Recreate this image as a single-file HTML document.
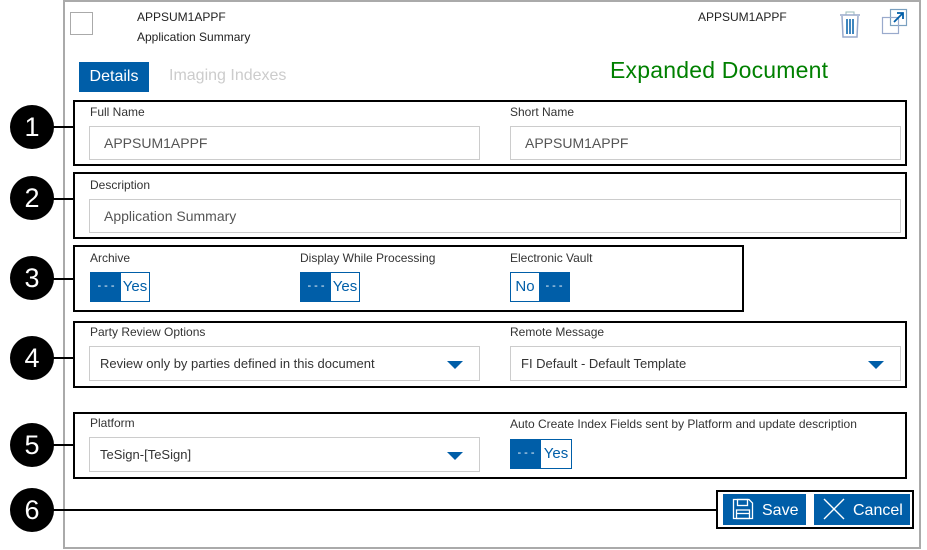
<!DOCTYPE html>
<html><head><meta charset="utf-8"><style>
*{box-sizing:border-box;margin:0;padding:0}
body{width:927px;height:550px;background:#fff;position:relative;overflow:hidden;font-family:"Liberation Sans",sans-serif;color:#222}
.a{position:absolute}
.panel{left:63px;top:0;width:858px;height:549px;border:2px solid #aaa;border-top-width:2px}
.box{border:2px solid #000;position:absolute}
.lbl{position:absolute;font-size:12px;color:#333}
.inp{position:absolute;border:1px solid #ccc;height:34px;font-size:14px;color:#555;padding-left:14px;line-height:32px}
.sel{position:absolute;border:1px solid #ccc;height:35px;font-size:13px;color:#333;padding-left:10px;line-height:33px}
.sel:after{content:"";position:absolute;right:16px;top:14px;border-left:8px solid transparent;border-right:8px solid transparent;border-top:8px solid #005ea8}
.circ{position:absolute;left:10px;width:44px;height:44px;border-radius:50%;background:#000;color:#fff;font-size:27px;text-align:center;line-height:44px}
.ln{position:absolute;left:50px;width:24px;height:2px;background:#000}
.tg{position:absolute;height:30px;border:1px solid #005ea8;display:flex;font-size:15px}
.tg .d{width:30px;background:#005ea8;color:#fff;text-align:center;line-height:26px;font-size:11px}
.tg .t{width:28px;color:#005ea8;text-align:center;line-height:28px}
.btn{position:absolute;background:#005ea8;color:#fff;font-size:16px;height:31px;line-height:33px}
</style></head><body>
<div class="a panel"></div>
<div class="a" style="left:70px;top:12px;width:23px;height:23px;border:1px solid #aaa"></div>
<div class="a" style="left:137px;top:10px;font-size:12px">APPSUM1APPF</div>
<div class="a" style="left:137px;top:30px;font-size:12px">Application Summary</div>
<div class="a" style="left:698px;top:10px;font-size:12px">APPSUM1APPF</div>
<svg class="a" style="left:838px;top:10px" width="24" height="30" viewBox="0 0 24 30"><rect x="8" y="2" width="8" height="3" fill="none" stroke="#9bb" stroke-width="1"/><line x1="2" y1="5" x2="22" y2="5" stroke="#9ac" stroke-width="1.5"/><path d="M4 6 L5 27 L19 27 L20 6" fill="none" stroke="#9ac" stroke-width="1.5"/><line x1="9" y1="9" x2="9" y2="24" stroke="#005ea8" stroke-width="1.5"/><line x1="12" y1="9" x2="12" y2="24" stroke="#005ea8" stroke-width="1.5"/><line x1="15" y1="9" x2="15" y2="24" stroke="#005ea8" stroke-width="1.5"/></svg>
<svg class="a" style="left:881px;top:8px" width="28" height="28" viewBox="0 0 28 28"><rect x="9.5" y="1.5" width="16" height="16" fill="#fff" stroke="#7aa0c0" stroke-width="1.2"/><rect x="1.5" y="9.5" width="16" height="16" fill="none" stroke="#9ac" stroke-width="1.2"/><line x1="13" y1="14" x2="22" y2="5" stroke="#005ea8" stroke-width="1.8"/><path d="M16 5 L22 5 L22 11" fill="none" stroke="#005ea8" stroke-width="1.8"/></svg>
<div class="a" style="left:79px;top:62px;width:70px;height:30px;background:#005ea8;color:#fff;font-size:16px;text-align:center;line-height:30px">Details</div>
<div class="a" style="left:169px;top:67px;font-size:16px;color:#ccc">Imaging Indexes</div>
<div class="a" style="left:610px;top:57px;font-size:23px;color:#008000;letter-spacing:0.2px">Expanded Document</div>

<div class="box" style="left:73px;top:100px;width:834px;height:66px"></div>
<div class="lbl" style="left:90px;top:105px">Full Name</div>
<div class="inp" style="left:89px;top:126px;width:391px">APPSUM1APPF</div>
<div class="lbl" style="left:510px;top:105px">Short Name</div>
<div class="inp" style="left:510px;top:126px;width:391px">APPSUM1APPF</div>

<div class="box" style="left:73px;top:172px;width:834px;height:67px"></div>
<div class="lbl" style="left:90px;top:178px">Description</div>
<div class="inp" style="left:89px;top:199px;width:812px">Application Summary</div>

<div class="box" style="left:73px;top:245px;width:671px;height:67px"></div>
<div class="lbl" style="left:90px;top:251px">Archive</div>
<div class="tg" style="left:90px;top:272px"><div class="d">- - -</div><div class="t">Yes</div></div>
<div class="lbl" style="left:300px;top:251px">Display While Processing</div>
<div class="tg" style="left:300px;top:272px"><div class="d">- - -</div><div class="t">Yes</div></div>
<div class="lbl" style="left:510px;top:251px">Electronic Vault</div>
<div class="tg" style="left:510px;top:272px"><div class="t">No</div><div class="d">- - -</div></div>

<div class="box" style="left:73px;top:321px;width:834px;height:67px"></div>
<div class="lbl" style="left:90px;top:325px">Party Review Options</div>
<div class="sel" style="left:89px;top:346px;width:391px">Review only by parties defined in this document</div>
<div class="lbl" style="left:510px;top:325px">Remote Message</div>
<div class="sel" style="left:510px;top:346px;width:391px">FI Default - Default Template</div>

<div class="box" style="left:73px;top:412px;width:834px;height:67px"></div>
<div class="lbl" style="left:90px;top:416px">Platform</div>
<div class="sel" style="left:89px;top:437px;width:391px">TeSign-[TeSign]</div>
<div class="lbl" style="left:510px;top:417px">Auto Create Index Fields sent by Platform and update description</div>
<div class="tg" style="left:510px;top:439px"><div class="d">- - -</div><div class="t" style="width:30px">Yes</div></div>

<div class="box" style="left:716px;top:490px;width:198px;height:39px"></div>
<div class="btn" style="left:723px;top:494px;width:83px"><svg style="position:absolute;left:9px;top:4px" width="22" height="22" viewBox="0 0 22 22"><path d="M1.5 1.5 H17 L20.5 5 V20.5 H1.5 Z" fill="none" stroke="#fff" stroke-width="1.3"/><rect x="5.5" y="1.5" width="10" height="6" fill="none" stroke="#fff" stroke-width="1.3"/><rect x="4.5" y="12" width="13" height="8.5" fill="none" stroke="#fff" stroke-width="1.3"/><line x1="4.5" y1="15.5" x2="17.5" y2="15.5" stroke="#fff" stroke-width="1.3"/></svg><span style="position:absolute;left:39px">Save</span></div>
<div class="btn" style="left:814px;top:494px;width:96px"><svg style="position:absolute;left:9px;top:4px" width="22" height="22" viewBox="0 0 22 22"><path d="M1 1 L21 21 M21 1 L1 21" stroke="#fff" stroke-width="1.4"/></svg><span style="position:absolute;left:39px">Cancel</span></div>

<div class="ln" style="top:126px"></div><div class="circ" style="top:105px">1</div>
<div class="ln" style="top:198px"></div><div class="circ" style="top:176px">2</div>
<div class="ln" style="top:278px"></div><div class="circ" style="top:256px">3</div>
<div class="ln" style="top:357px"></div><div class="circ" style="top:336px">4</div>
<div class="ln" style="top:444px"></div><div class="circ" style="top:423px">5</div>
<div class="ln" style="top:509px;width:667px"></div><div class="circ" style="top:488px">6</div>
</body></html>
